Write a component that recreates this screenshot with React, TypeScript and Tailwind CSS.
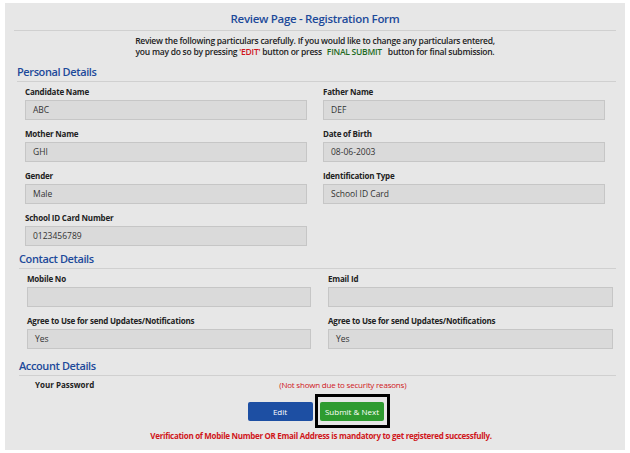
import React from 'react';

const font = { fontFamily: '"Open Sans", "Liberation Sans", sans-serif' };

const Field: React.FC<{ label: string; value?: string }> = ({ label, value }) => (
  <div>
    <p className="text-[8px] font-bold text-[#222] h-[13px] leading-[13px] mb-[2px] tracking-[-0.2px]">{label}</p>
    <div className="h-[20px] bg-[#dadada] border border-[#c6c6c6] px-[7px] flex items-center text-[8.5px] text-[#333]">
      {value}
    </div>
  </div>
);

const SectionTitle: React.FC<{ title: string; className?: string }> = ({ title, className }) => (
  <div className={className}>
    <h2 className="text-[11px] font-semibold text-[#1d4a9a] leading-[15px] tracking-[-0.4px]">{title}</h2>
    <div className="border-b border-[#d0d0d0] mt-[2px]" />
  </div>
);

export default function App() {
  return (
    <div className="w-[630px] h-[453px] bg-white pt-[3px] px-[5px] pb-[3px]" style={font}>
      <div className="h-full bg-[#e7e7e7] px-[9px] pt-[7px]">
        {/* Header */}
        <h1 className="text-center text-[11.5px] font-semibold text-[#1d4a9a] leading-[18px] tracking-[-0.3px]">
          Review Page - Registration Form
        </h1>
        <div className="border-b border-[#d0d0d0] mt-[2px]" />
        <div className="text-center text-[8.5px] font-semibold text-[#222] leading-[11px] mt-[4px] tracking-[-0.25px]">
          <p>Review the following particulars carefully. If you would like to change any particulars entered,</p>
          <p>
            you may do so by pressing <span className="text-[#d0161b]">'EDIT'</span> button or press{' '}
            <span className="text-[#1f6b1f] ml-[3px] mr-[4px]">FINAL SUBMIT</span> button for final submission.
          </p>
        </div>

        {/* Personal Details */}
        <SectionTitle title="Personal Details" className="mt-[7px] ml-[3px]" />
        <div className="grid grid-cols-[282px_282px] gap-x-[16px] gap-y-[7px] ml-[11px] mt-[3px]">
          <Field label="Candidate Name" value="ABC" />
          <Field label="Father Name" value="DEF" />
          <Field label="Mother Name" value="GHI" />
          <Field label="Date of Birth" value="08-06-2003" />
          <Field label="Gender" value="Male" />
          <Field label="Identification Type" value="School ID Card" />
          <Field label="School ID Card Number" value="0123456789" />
        </div>

        {/* Contact Details */}
        <SectionTitle title="Contact Details" className="mt-[5px] ml-[5px]" />
        <div className="grid grid-cols-[284px_285px] gap-x-[17px] gap-y-[7px] ml-[13px] mt-[3px]">
          <Field label="Mobile No" />
          <Field label="Email Id" />
          <Field label="Agree to Use for send Updates/Notifications" value="Yes" />
          <Field label="Agree to Use for send Updates/Notifications" value="Yes" />
        </div>

        {/* Account Details */}
        <SectionTitle title="Account Details" className="mt-[9px] ml-[5px]" />
        <div className="flex items-center text-[8px] mt-[2px] h-[13px]">
          <span className="ml-[21px] font-bold text-[#222]">Your Password</span>
          <span className="ml-[185px] text-[#d0161b] tracking-[-0.2px]">(Not shown due to security reasons)</span>
        </div>

        <div className="flex justify-center items-center gap-[2px] mt-[3px] ml-[7px]">
          <button className="w-[65px] h-[19px] rounded-[2px] bg-[#1d4fa3] text-white text-[8px] leading-[19px]">Edit</button>
          <div className="h-[34px] w-[75px] border-[3px] border-black flex items-center justify-center">
            <button className="w-[64px] h-[19px] rounded-[2px] bg-[#2e9b30] text-white text-[8px] leading-[19px]">Submit &amp; Next</button>
          </div>
        </div>

        <p className="text-center text-[8px] font-bold text-[#d0161b] mt-[2px] ml-[12px] leading-[12px] tracking-[-0.3px]">
          Verification of Mobile Number OR Email Address is mandatory to get registered successfully.
        </p>
      </div>
    </div>
  );
}
